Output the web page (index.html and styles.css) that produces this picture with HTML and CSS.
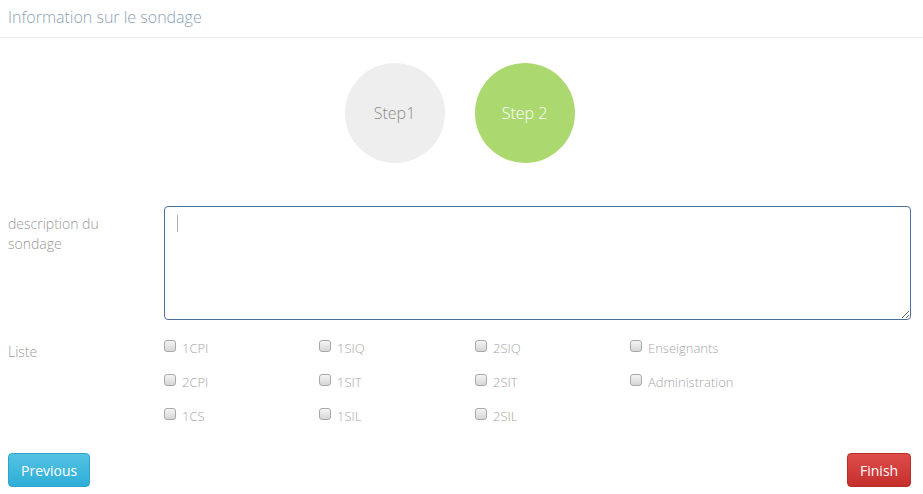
FILE: index.html
```html
<!DOCTYPE html>
<html lang="fr">
<head>
<meta charset="utf-8">
<title>Information sur le sondage</title>
<link rel="stylesheet" href="styles.css">
</head>
<body>
<div class="panel">
  <div class="panel-heading">Information sur le sondage</div>
  <div class="steps">
    <div class="step step-idle">Step1</div>
    <div class="step step-active">Step 2</div>
  </div>
  <div class="form-row row-desc">
    <label class="form-label">description du sondage</label>
    <div class="field">
      <div class="textarea-wrap">
        <textarea class="textarea"></textarea>
      </div>
    </div>
  </div>
  <div class="form-row row-list">
    <label class="form-label">Liste</label>
    <div class="checks">
      <label class="check"><input type="checkbox"><span>1CPI</span></label>
      <label class="check"><input type="checkbox"><span>1SIQ</span></label>
      <label class="check"><input type="checkbox"><span>2SIQ</span></label>
      <label class="check"><input type="checkbox"><span>Enseignants</span></label>
      <label class="check"><input type="checkbox"><span>2CPI</span></label>
      <label class="check"><input type="checkbox"><span>1SIT</span></label>
      <label class="check"><input type="checkbox"><span>2SIT</span></label>
      <label class="check"><input type="checkbox"><span>Administration</span></label>
      <label class="check"><input type="checkbox"><span>1CS</span></label>
      <label class="check"><input type="checkbox"><span>1SIL</span></label>
      <label class="check"><input type="checkbox"><span>2SIL</span></label>
    </div>
  </div>
  <div class="actions">
    <button class="btn btn-info">Previous</button>
    <button class="btn btn-danger">Finish</button>
  </div>
</div>
</body>
</html>
```
FILE: styles.css
```css
html, body {
  margin: 0;
  padding: 0;
  background: #fff;
}
body {
  font-family: "Open Sans", "Liberation Sans", sans-serif;
  font-size: 13px;
  color: #999;
}
.panel {
  display: flex;
  flex-direction: column;
}
.panel-heading {
  height: 38px;
  box-sizing: border-box;
  padding: 5px 8px 0;
  line-height: 24px;
  font-size: 16px;
  font-weight: 300;
  color: #8ba3b6;
  border-bottom: 1px solid #eeeeee;
}
.steps {
  display: flex;
  justify-content: center;
  gap: 30px;
  margin-top: 25px;
  padding-right: 4px;
}
.step {
  width: 100px;
  height: 100px;
  border-radius: 50%;
  display: flex;
  align-items: center;
  justify-content: center;
  font-size: 16px;
  font-weight: 300;
}
.step-idle {
  background: #eeeeee;
  color: #8c8c8c;
}
.step-active {
  background: #acd96f;
  color: #ffffff;
}
.form-row {
  display: flex;
  padding: 0 12px 0 8px;
}
.form-label {
  width: 156px;
  flex: none;
  line-height: 20px;
  font-size: 14px;
  font-weight: 300;
  color: #999;
}
.row-desc {
  margin-top: 43px;
}
.row-desc .form-label {
  padding-top: 8px;
  width: 110px;
  margin-right: 46px;
}
.field {
  flex: 1;
}
.textarea-wrap {
  position: relative;
}
.textarea-wrap::after {
  content: "";
  position: absolute;
  left: 13px;
  top: 9px;
  width: 1px;
  height: 17px;
  background: #b0b0b0;
}
.textarea {
  display: block;
  box-sizing: border-box;
  width: 100%;
  height: 114px;
  margin: 0;
  border: 1px solid #4d6f9c;
  border-radius: 4px;
  outline: none;
  resize: both;
  font-family: inherit;
}
.row-list {
  margin-top: 16px;
}
.row-list .form-label {
  padding-top: 6px;
}
.checks {
  display: grid;
  grid-template-columns: 155px 156px 155px 156px;
  grid-auto-rows: 34px;
}
.check {
  display: flex;
  align-items: center;
  height: 20px;
  gap: 6px;
  font-weight: 300;
  color: #a6a6a6;
  line-height: 20px;
}
.check span {
  padding-top: 3px;
}
.check input {
  appearance: none;
  -webkit-appearance: none;
  width: 12px;
  height: 12px;
  margin: 0;
  box-sizing: border-box;
  border: 1px solid #a9a9a9;
  border-radius: 3px;
  background: linear-gradient(#f4f4f4, #d6d6d6);
}
.actions {
  display: flex;
  justify-content: space-between;
  padding: 0 12px 0 8px;
  margin-top: 15px;
}
.btn {
  font-family: "Open Sans", "Liberation Sans", sans-serif;
  font-size: 14px;
  color: #fff;
  height: 34px;
  padding: 0 12px;
  border-radius: 4px;
  cursor: pointer;
}
.btn-info {
  width: 82px;
  background: linear-gradient(#54c2e3, #2eaed6);
  border: 1px solid #2ba5cc;
}
.btn-danger {
  width: 64px;
  background: linear-gradient(#de4d4a, #c42f2c);
  border: 1px solid #b92c28;
}
```
